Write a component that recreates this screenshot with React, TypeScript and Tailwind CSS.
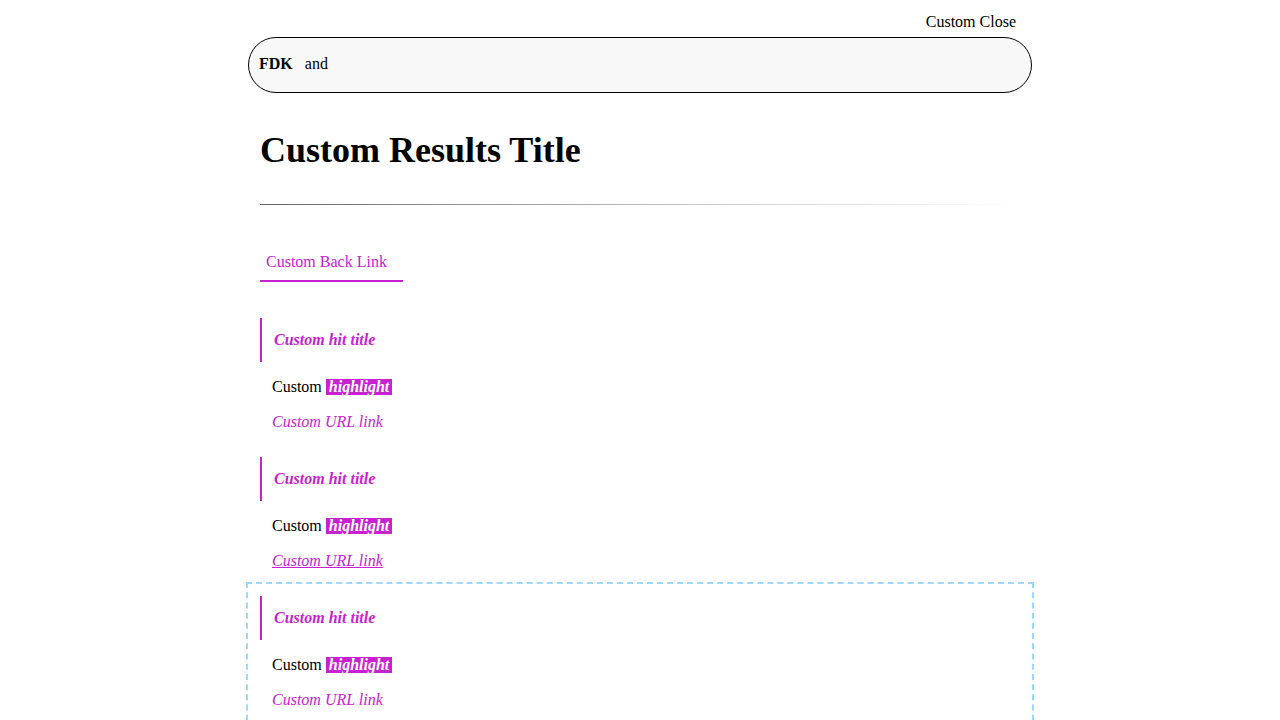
const hits = [
  { id: 1, underline: false, focused: false },
  { id: 2, underline: true, focused: false },
  { id: 3, underline: false, focused: true },
]

function Hit({ underline, focused }: { underline: boolean; focused: boolean }) {
  return (
    <div
      className={
        '-mx-[2px] border-2 px-3 pt-3 ' +
        (focused ? 'border-dashed border-[#9fd7fd] pb-5' : 'border-transparent pb-[10px]')
      }
    >
      <div className="flex h-[44px] items-center border-l-2 border-[#c822d0] pl-3">
        <span className="font-bold italic text-[#c822d0]">Custom hit title</span>
      </div>
      <p className="mt-4 pl-3 leading-[18px]">
        Custom{' '}
        <span className="inline-block bg-[#c822d0] px-[3px] leading-[16px] font-bold italic text-white">
          highlight
        </span>
      </p>
      <p className="mt-[17px] pl-3 leading-[18px]">
        <a className={'italic text-[#c822d0] ' + (underline ? 'underline' : '')}>Custom URL link</a>
      </p>
    </div>
  )
}

export default function App() {
  return (
    <div className="min-h-screen bg-white font-['Liberation_Serif',serif] text-[16px] text-black">
      <div className="mx-auto w-[784px]">
        {/* Close */}
        <div className="flex h-[37px] items-center justify-end pt-[7px] pr-4">
          <button className="leading-[20px]">Custom Close</button>
        </div>

        {/* Search bar */}
        <div className="flex h-[56px] items-center rounded-full border border-black bg-[#f8f8f8] px-[10px] pb-[2px]">
          <span className="font-bold">FDK</span>
          <span className="ml-3">and</span>
        </div>

        <div className="px-3">
          <h1 className="mt-[36px] text-[36px] leading-[43px] font-bold">Custom Results Title</h1>

          {/* Divider */}
          <div className="mt-[32px] h-px bg-gradient-to-r from-[#666666] via-[#cccccc] via-60% to-transparent" />

          {/* Back link */}
          <div className="mt-[45px]">
            <a className="inline-block border-b-2 border-[#c822d0] pr-4 pb-[9px] pl-[6px] leading-[18px] text-[#c822d0]">
              Custom Back Link
            </a>
          </div>
        </div>

        {/* Hits */}
        <div className="mt-[22px]">
          {hits.map((h) => (
            <Hit key={h.id} underline={h.underline} focused={h.focused} />
          ))}
        </div>
      </div>
    </div>
  )
}
